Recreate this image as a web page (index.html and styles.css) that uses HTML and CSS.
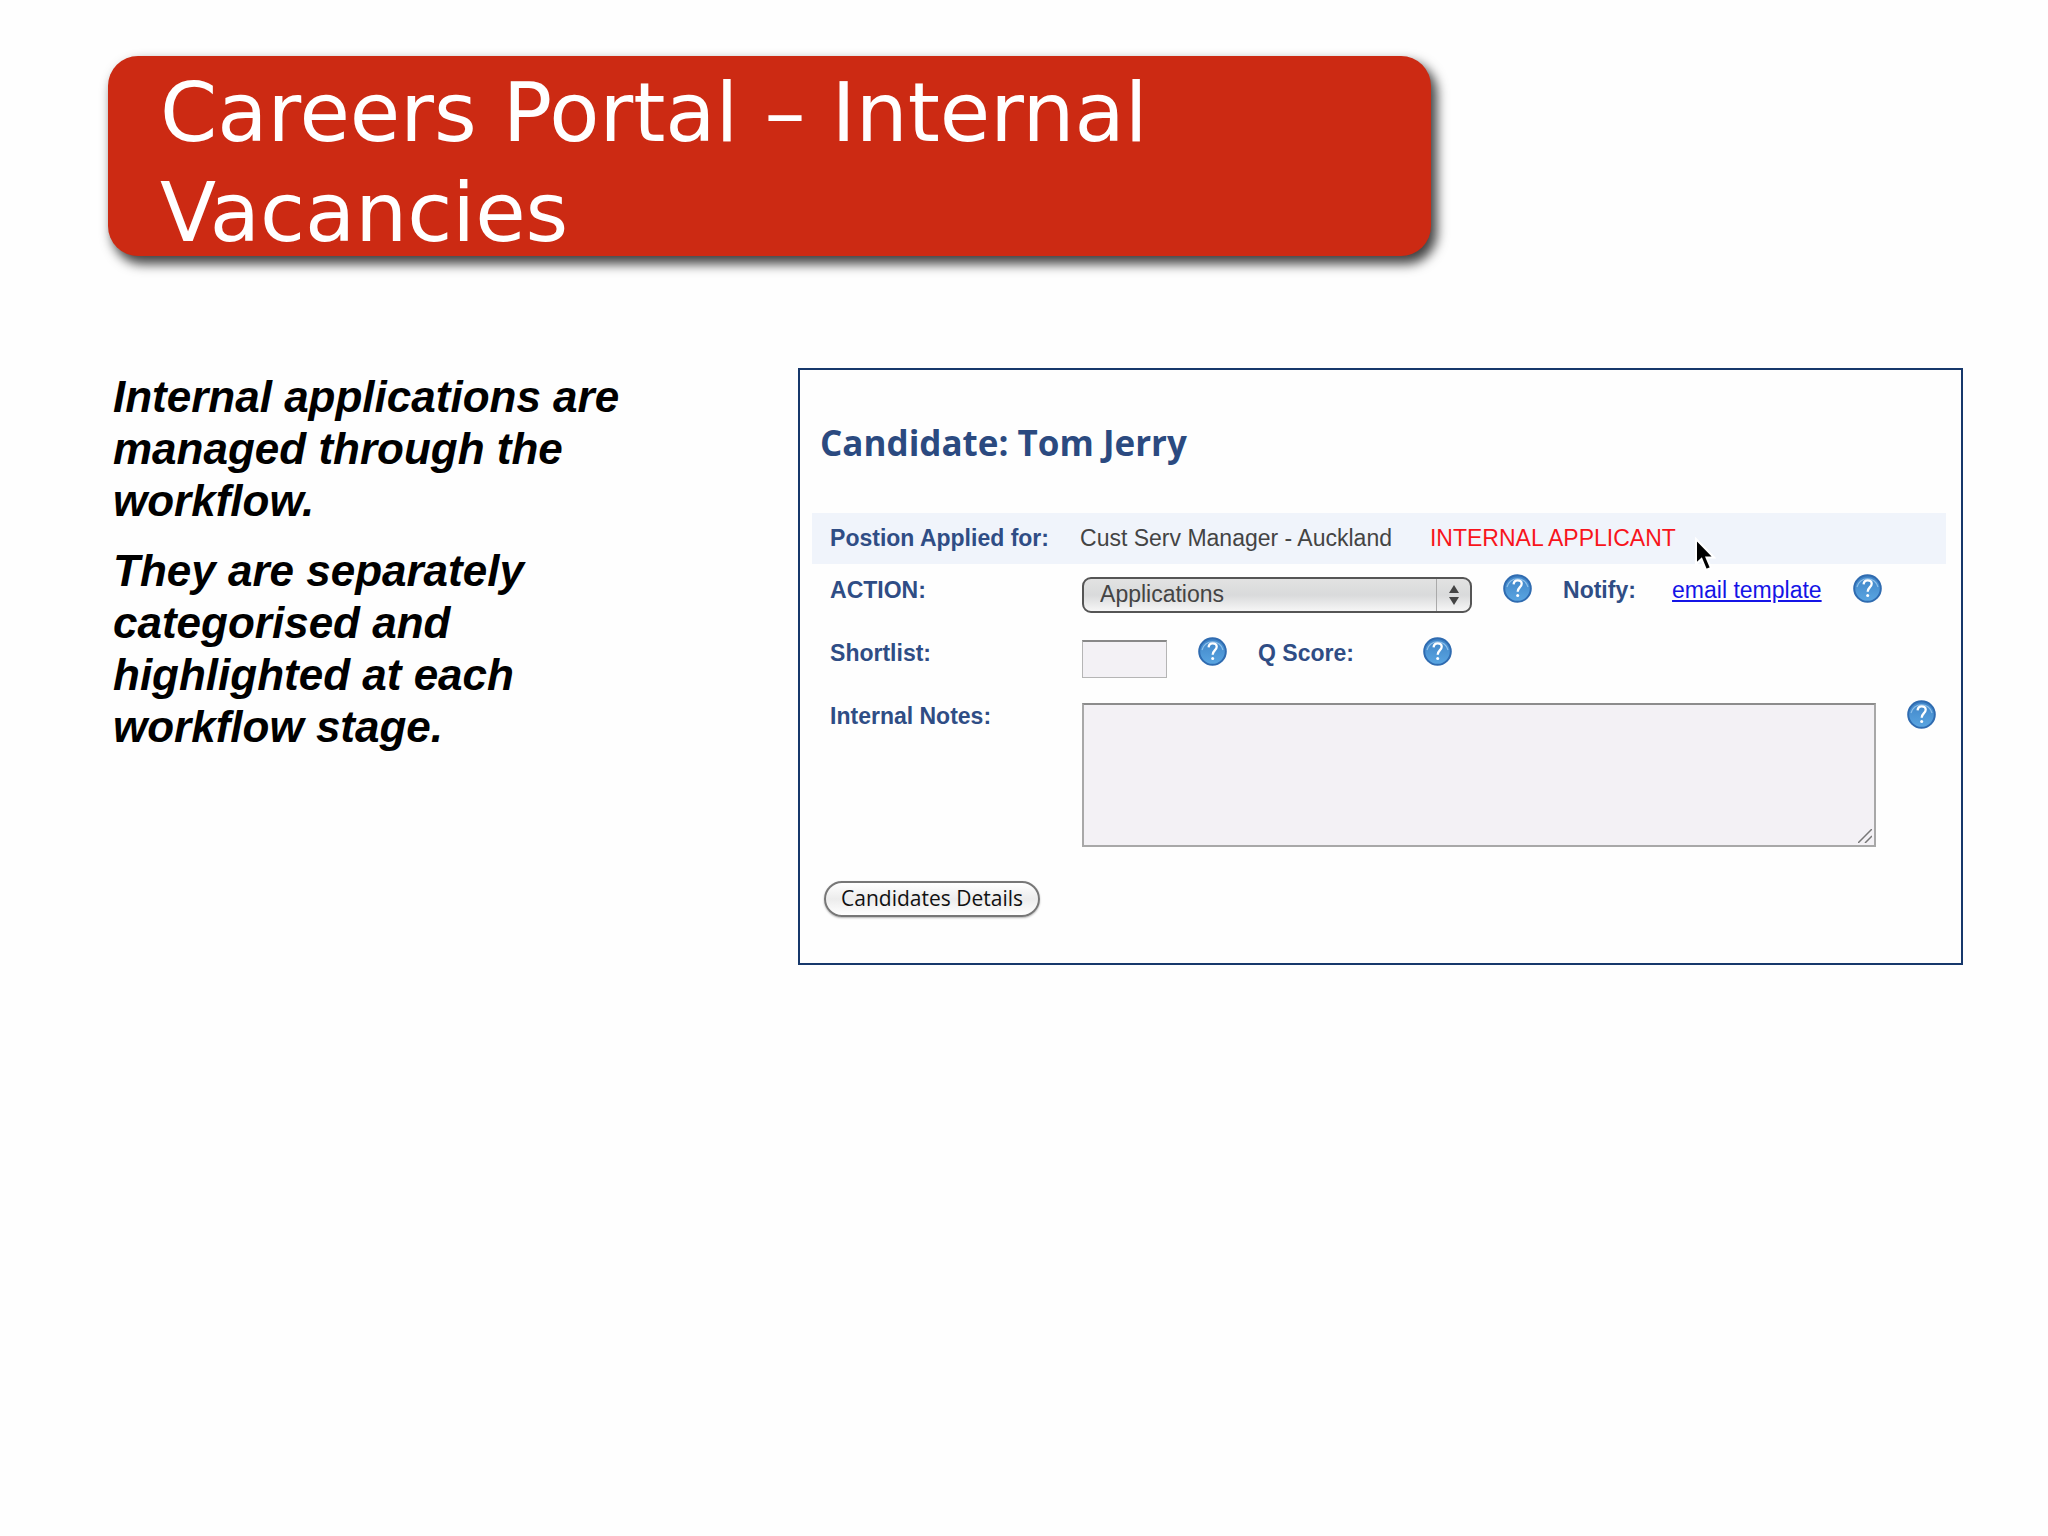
FILE: index.html
```
<!DOCTYPE html>
<html lang="en">
<head>
    <meta charset="UTF-8">
    <meta name="viewport" content="width=device-width, initial-scale=1.0">
    <title>Careers Portal – Internal Vacancies</title>
    <link rel="stylesheet" href="styles.css">
</head>
<body>
    <!-- shared help icon -->
    <svg class="sprite" aria-hidden="true">
        <defs>
            <linearGradient id="help-fill" x1="0" y1="0" x2="0" y2="1">
                <stop offset="0" stop-color="#3f83c6"/>
                <stop offset="1" stop-color="#5aa6e2"/>
            </linearGradient>
        </defs>
        <symbol id="help" viewBox="0 0 29 29">
            <circle cx="14.5" cy="14.5" r="13.3" fill="url(#help-fill)" stroke="#2f6bb0" stroke-width="2"/>
            <path d="M4 13a10.8 10.8 0 0 1 21 0" fill="none" stroke="#8fc0ea" stroke-width="1.2"/>
            <path d="M10.6 10.3c.2-2.900 2-4 4.100-4 2.300 0 4 1.300 4 3.500 0 3.300-4 3.500-4 8" fill="none" stroke="#fff" stroke-width="2.300"/>
            <circle cx="14.700" cy="21.500" r="1.500" fill="#fff"/>
        </symbol>
    </svg>

    <header class="banner">
        <h1>Careers Portal – Internal Vacancies</h1>
    </header>

    <main class="content">
        <div class="notes">
            <p>Internal applications are managed through the workflow.</p>
            <p>They are separately categorised and highlighted at each workflow stage.</p>
        </div>

        <section class="panel">
            <h2>Candidate: Tom Jerry</h2>
            <form>
                <div class="row row-head">
                    <span class="label main-label">Postion Applied for:</span>
                    <span class="position">Cust Serv Manager - Auckland</span>
                    <span class="internal">INTERNAL APPLICANT
                        <svg class="cursor" viewBox="0 0 22 36" aria-hidden="true">
                            <path d="M2 2v25l5.500-5 4.500 11 5-2-4.500-10.500h7.500z" fill="#000" stroke="#fff" stroke-width="2"/>
                        </svg>
                    </span>
                </div>
                <div class="row">
                    <label class="label main-label" for="action">ACTION:</label>
                    <span class="field select-wrap">
                        <select id="action">
                            <option>Applications</option>
                        </select>
                        <svg class="arrows" viewBox="0 0 10 20" aria-hidden="true">
                            <path d="M5 0l5 8H0zM5 20l5-8H0z" fill="#444"/>
                        </svg>
                    </span>
                    <svg class="help"><use href="#help"/></svg>
                    <span class="label notify">Notify:</span>
                    <a href="#">email template</a>
                    <svg class="help"><use href="#help"/></svg>
                </div>
                <div class="row">
                    <label class="label main-label" for="shortlist">Shortlist:</label>
                    <input class="field" type="text" id="shortlist">
                    <svg class="help"><use href="#help"/></svg>
                    <span class="label score">Q Score:</span>
                    <svg class="help"><use href="#help"/></svg>
                </div>
                <div class="row">
                    <label class="label main-label" for="internal-notes">Internal Notes:</label>
                    <div class="field textarea-wrap">
                        <textarea id="internal-notes"></textarea>
                        <svg class="grip" viewBox="0 0 14 14" aria-hidden="true">
                            <path d="M0 14L14 0M7 14l7-7" stroke="#777" stroke-width="1.500"/>
                        </svg>
                    </div>
                    <svg class="help"><use href="#help"/></svg>
                </div>
                <button type="button">Candidates Details</button>
            </form>
        </section>
    </main>
</body>
</html>
```
FILE: styles.css
```
* {
    box-sizing: border-box;
}

body {
    margin: 0;
    padding: 56px 85px 56px 108px;
    background: #fefefe;
    font-family: "Liberation Sans", Arial, sans-serif;
    color: #000;
}

.sprite {
    position: absolute;
    width: 0;
    height: 0;
}

.banner {
    width: 71.3%;
    height: 200px;
    padding: 7px 52px 0;
    border-radius: 30px;
    background: #cc2a13;
    box-shadow: 5px 7px 12px 1px rgba(0, 0, 0, 0.75);
}

.banner h1 {
    max-width: 1100px;
    margin: 0;
    font-family: "DejaVu Sans", sans-serif;
    font-size: 82px;
    font-weight: normal;
    line-height: 100px;
    color: #fff;
}

.content {
    display: flex;
    align-items: flex-start;
    margin-top: 112px;
}

.notes {
    width: 37.2%;
    padding: 3px 140px 0 5px;
}

.notes p {
    margin: 0 0 18px;
    font-size: 44px;
    font-style: italic;
    font-weight: bold;
    line-height: 52px;
}

.panel {
    flex: 1;
    padding: 53px 15px 46px 12px;
    border: 2px solid #17386b;
}

.panel h2 {
    margin: 0 0 50px 8px;
    font-family: "Open Sans", sans-serif;
    font-size: 35px;
    line-height: 40px;
    color: #2b4a80;
}

.row {
    display: flex;
    align-items: flex-start;
    gap: 31px;
    min-height: 63px;
    padding: 10px 10px 0 18px;
    font-size: 23px;
    line-height: 32px;
}

.row-head {
    gap: 38px;
    min-height: 51px;
    background: #f0f4fb;
    line-height: 30px;
}

.label {
    font-weight: bold;
    color: #2f4d85;
}

.main-label {
    width: 250px;
    margin-right: -31px;
}

.row-head .main-label {
    margin-right: -38px;
}

.position {
    color: #444;
}

.internal {
    position: relative;
    color: #f8141c;
}

.cursor {
    position: absolute;
    left: 100%;
    top: 14px;
    width: 22px;
    height: 36px;
    margin-left: 18px;
}

.field {
    margin: 3px 0 0 2px;
}

.select-wrap {
    position: relative;
    width: 390px;
}

select {
    display: block;
    width: 100%;
    height: 36px;
    padding: 0 16px 2px;
    appearance: none;
    border: 2px solid #555;
    border-radius: 9px;
    background: linear-gradient(to right, transparent 352px, #aaa 352px, #aaa 353px, transparent 353px), linear-gradient(#e2e2e2, #d9dadb 50%, #f6f6f6);
    font-family: inherit;
    font-size: 23px;
    color: #444;
}

.arrows {
    position: absolute;
    right: 13px;
    top: 8px;
    width: 10px;
    height: 20px;
}

.help {
    flex: none;
    width: 29px;
    height: 29px;
}

.notify {
    width: 78px;
}

.score {
    width: 134px;
}

a {
    color: #1414e6;
}

input {
    width: 85px;
    height: 38px;
    border: 1px solid #b5b5b5;
    border-top: 2px solid #888;
    background: #f3f1f5;
    font-size: 23px;
}

.textarea-wrap {
    position: relative;
    flex: 1;
}

textarea {
    display: block;
    width: 100%;
    height: 144px;
    border: 2px solid #a8a8a8;
    border-top-color: #8c8c8c;
    background: #f3f1f5;
    resize: none;
    font-size: 23px;
}

.grip {
    position: absolute;
    right: 4px;
    bottom: 4px;
    width: 14px;
    height: 14px;
}

button {
    display: block;
    height: 36px;
    margin: 34px 0 0 12px;
    padding: 0 15px 2px;
    border: 2px solid #777;
    border-radius: 18px;
    background: linear-gradient(#fff, #ececec 50%, #fff);
    box-shadow: 0 1px 2px rgba(0, 0, 0, 0.3);
    font-family: "Open Sans", sans-serif;
    font-size: 21px;
    line-height: 30px;
    color: #111;
}
```
